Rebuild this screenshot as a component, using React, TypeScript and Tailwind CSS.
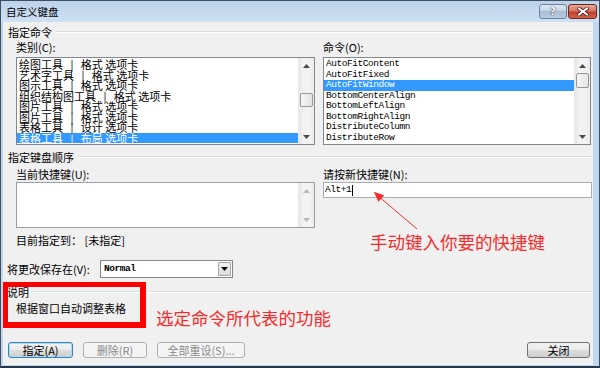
import React from "react";

const cats = [
  "绘图工具   |   格式 选项卡",
  "艺术字工具   |   格式 选项卡",
  "图示工具   |   格式 选项卡",
  "组织结构图工具   |   格式 选项卡",
  "图片工具   |   格式 选项卡",
  "图片工具   |   格式 选项卡",
  "表格工具   |   设计 选项卡",
  "表格工具   |   布局 选项卡",
];

const cmds = [
  "AutoFitContent",
  "AutoFitFixed",
  "AutoFitWindow",
  "BottomCenterAlign",
  "BottomLeftAlign",
  "BottomRightAlign",
  "DistributeColumn",
  "DistributeRow",
];

function Tri({ up, disabled }: { up?: boolean; disabled?: boolean }) {
  const c = disabled ? "#b8b8b8" : "#4a4a4a";
  return (
    <svg width="7" height="4" viewBox="0 0 7 4">
      {up ? <polygon points="3.5,0 7,4 0,4" fill={c} /> : <polygon points="0,0 7,0 3.5,4" fill={c} />}
    </svg>
  );
}

function ScrollBar({ thumbTop, thumbH, disabled }: { thumbTop?: number; thumbH?: number; disabled?: boolean }) {
  return (
    <div className="relative w-[16px] h-full flex flex-col bg-[linear-gradient(to_right,#e6e6e6,#f3f3f3_30%,#f3f3f3_70%,#ebebeb)] border-l border-[#e8e8e8]">
      <div className="h-[15px] flex items-center justify-center">
        <Tri up disabled={disabled} />
      </div>
      <div className="flex-1" />
      <div className="h-[15px] flex items-center justify-center">
        <Tri disabled={disabled} />
      </div>
      {thumbTop !== undefined && (
        <div
          className="absolute left-[1px] right-[1px] rounded-[2px] border border-[#979797] bg-[linear-gradient(to_right,#f5f5f5,#e4e4e4)]"
          style={{ top: thumbTop, height: thumbH }}
        />
      )}
    </div>
  );
}

function GroupHeader({ title }: { title: string }) {
  return (
    <div className="flex items-center h-[12px] pl-[5px] pr-[1px]">
      <span className="leading-[12px] whitespace-nowrap">{title}</span>
      <div className="flex-1 ml-[4px] h-[2px] border-t border-t-[#d5dfe8] border-b border-b-white" />
    </div>
  );
}

function Btn({ label, w, kind }: { label: string; w: string; kind?: "default" | "disabled" }) {
  if (kind === "default") {
    return (
      <div className={`${w} h-[16px] rounded-[3px] border border-[#3c7fb1] shadow-[inset_0_0_0_1px_#a6def5] bg-[linear-gradient(to_bottom,#f2f2f2_0%,#ebebeb_50%,#dddddd_50%,#cfcfcf_100%)] flex items-center justify-center leading-[12px]`}>
        {label}
      </div>
    );
  }
  if (kind === "disabled") {
    return (
      <div className={`${w} h-[16px] rounded-[3px] border border-[#adb2b5] bg-[#f4f4f4] text-[#8a8a8a] flex items-center justify-center leading-[12px]`}>
        {label}
      </div>
    );
  }
  return (
    <div className={`${w} h-[16px] rounded-[3px] border border-[#707070] bg-[linear-gradient(to_bottom,#f2f2f2_0%,#ebebeb_50%,#dddddd_50%,#cfcfcf_100%)] flex items-center justify-center leading-[12px]`}>
      {label}
    </div>
  );
}

export default function App() {
  return (
    <div className="relative w-[600px] h-[368px] overflow-hidden flex flex-col bg-[#c2d6ec] border-l border-t border-r border-[#3e4f63] border-b-[2px] border-b-[#24364c] font-['Noto_Sans_CJK_SC',sans-serif] text-[11px] text-black">
      {/* title bar */}
      <div className="h-[21px] flex items-start justify-between bg-[linear-gradient(to_bottom,#bcd2ea,#cfe0f2)] pr-[2px]">
        <div className="pl-[5px] pt-[5px] leading-[12px] text-[10.5px]">自定义键盘</div>
        <div className="flex gap-[1px] pt-[3px]">
          <div className="w-[28px] h-[15px] rounded-[3px] border border-[#6f819a] bg-[linear-gradient(to_bottom,#dfe8f2,#c2d2e4_50%,#aabdd4_50%,#b8cbe0)] flex items-center justify-center">
            <span className="font-['DejaVu_Sans',sans-serif] font-bold text-[11px] leading-[11px] text-[#f6f8fb] [text-shadow:0_0_1px_#2c3b52,0_0_1px_#2c3b52]">?</span>
          </div>
          <div className="w-[29px] h-[15px] rounded-[3px] border border-[#6e2a22] bg-[linear-gradient(to_bottom,#e8a999,#d67462_45%,#c3402f_55%,#d2614a)] flex items-center justify-center">
            <svg width="12" height="9" viewBox="0 0 12 9">
              <path d="M2 1.5 L10 7.5 M10 1.5 L2 7.5" stroke="#4a1610" strokeWidth="3.6" strokeLinecap="square" />
              <path d="M2 1.5 L10 7.5 M10 1.5 L2 7.5" stroke="#ffffff" strokeWidth="2" strokeLinecap="square" />
            </svg>
          </div>
        </div>
      </div>

      {/* client area */}
      <div className="flex-1 ml-[2px] mb-[1px] w-[590px] bg-[#f0f0f0] flex flex-col">
        <div className="mt-[4px]">
          <GroupHeader title="指定命令" />
        </div>

        <div className="mt-[3px] h-[12px] flex pl-[13px] leading-[12px]">
          <div className="w-[307px]">类别(C):</div>
          <div>命令(O):</div>
        </div>

        <div className="mt-[4px] h-[88px] flex pl-[13px] gap-[8px]">
          <div className="w-[299px] h-[88px] border border-[#828790] bg-white flex">
            <div className="flex-1 pt-[1px] overflow-hidden">
              {cats.map((c, i) => (
                <div
                  key={i}
                  className={
                    i === 7
                      ? "h-[10.5px] leading-[10.5px] pl-[2px] whitespace-pre bg-[#3399ff] text-white"
                      : "h-[10.5px] leading-[10.5px] pl-[2px] whitespace-pre"
                  }
                >
                  {c}
                </div>
              ))}
            </div>
            <ScrollBar thumbTop={35} thumbH={14} />
          </div>

          <div className="w-[268px] h-[88px] border border-[#828790] bg-white flex">
            <div className="flex-1 pt-[1px] overflow-hidden font-['Liberation_Mono',monospace] text-[9.5px] tracking-[-0.45px]">
              {cmds.map((c, i) => (
                <div
                  key={i}
                  className={
                    i === 2
                      ? "h-[10.5px] leading-[10.5px] pl-[2px] bg-[#3399ff] text-white"
                      : "h-[10.5px] leading-[10.5px] pl-[2px]"
                  }
                >
                  {c}
                </div>
              ))}
            </div>
            <ScrollBar thumbTop={15} thumbH={15} />
          </div>
        </div>

        <div className="mt-[6px]">
          <GroupHeader title="指定键盘顺序" />
        </div>

        <div className="mt-[5px] h-[12px] flex pl-[13px] leading-[12px]">
          <div className="w-[307px]">当前快捷键(U):</div>
          <div>请按新快捷键(N):</div>
        </div>

        <div className="mt-[2px] flex items-start pl-[13px] gap-[8px]">
          <div className="w-[299px] h-[46px] border border-[#9a9ea6] bg-white flex">
            <div className="flex-1" />
            <ScrollBar disabled />
          </div>
          <div className="w-[269px] h-[16px] border border-[#abadb3] bg-white flex items-center pl-[1px] font-['Liberation_Mono',monospace] text-[9.5px] tracking-[-0.45px] leading-[12px]">
            <span>Alt+1</span>
            <span className="ml-[1px] w-0 h-[11px] border-l border-black" />
          </div>
        </div>

        <div className="mt-[6px] h-[12px] pl-[13px] leading-[12px] whitespace-pre">目前指定到： [未指定]</div>

        <div className="mt-[14px] h-[18px] flex items-center pl-[4px]">
          <div className="w-[93px] leading-[12px]">将更改保存在(V):</div>
          <div className="w-[133px] h-[18px] border border-[#828790] bg-white flex">
            <div className="flex-1 pl-[3px] font-['Liberation_Mono',monospace] font-bold text-[9.5px] tracking-[-0.45px] leading-[16px]">Normal</div>
            <div className="w-[13px] m-[1px] border border-[#a7a7a7] rounded-[1px] bg-[linear-gradient(to_bottom,#f2f2f2,#dcdcdc)] flex items-center justify-center">
              <svg width="7" height="4" viewBox="0 0 7 4">
                <polygon points="0,0 7,0 3.5,4" fill="#000" />
              </svg>
            </div>
          </div>
        </div>

        <div className="mt-[8px]">
          <div className="flex items-center h-[12px] pl-[4px] pr-[1px]">
            <span className="leading-[12px] whitespace-nowrap">说明</span>
            <div className="flex-1 ml-[4px] h-[2px] border-t border-t-[#d5dfe8] border-b border-b-white" />
          </div>
        </div>

        <div className="mt-[4px] h-[12px] pl-[13px] leading-[12px]">根据窗口自动调整表格</div>

        <div className="mt-[28px] h-[16px] flex pl-[5px] pr-[3px]">
          <Btn label="指定(A)" w="w-[65px]" kind="default" />
          <div className="w-[10px]" />
          <Btn label="删除(R)" w="w-[64px]" kind="disabled" />
          <div className="w-[10px]" />
          <Btn label="全部重设(S)..." w="w-[88px]" kind="disabled" />
          <div className="flex-1" />
          <Btn label="关闭" w="w-[63px]" />
        </div>
      </div>

      {/* annotations */}
      <div className="absolute left-[2px] top-[281px] w-[143px] h-[46px] border-t-[5px] border-l-[5px] border-r-[6px] border-b-[6px] border-[#ff0000]" />
      <svg className="absolute left-0 top-0 pointer-events-none" width="600" height="368">
        <line x1="416" y1="228" x2="379" y2="196.5" stroke="#f52c2c" strokeWidth="1" />
        <polygon points="372.7,190.7 383.2,194.3 377.5,200.8" fill="#f52c2c" />
      </svg>
      <div className="absolute left-[369px] top-[232px] text-[17.5px] leading-[18px] text-[#f52c2c] whitespace-nowrap">
        手动键入你要的快捷键
      </div>
      <div className="absolute left-[155px] top-[308px] text-[17.5px] leading-[18px] text-[#f52c2c] whitespace-nowrap">
        选定命令所代表的功能
      </div>
    </div>
  );
}
